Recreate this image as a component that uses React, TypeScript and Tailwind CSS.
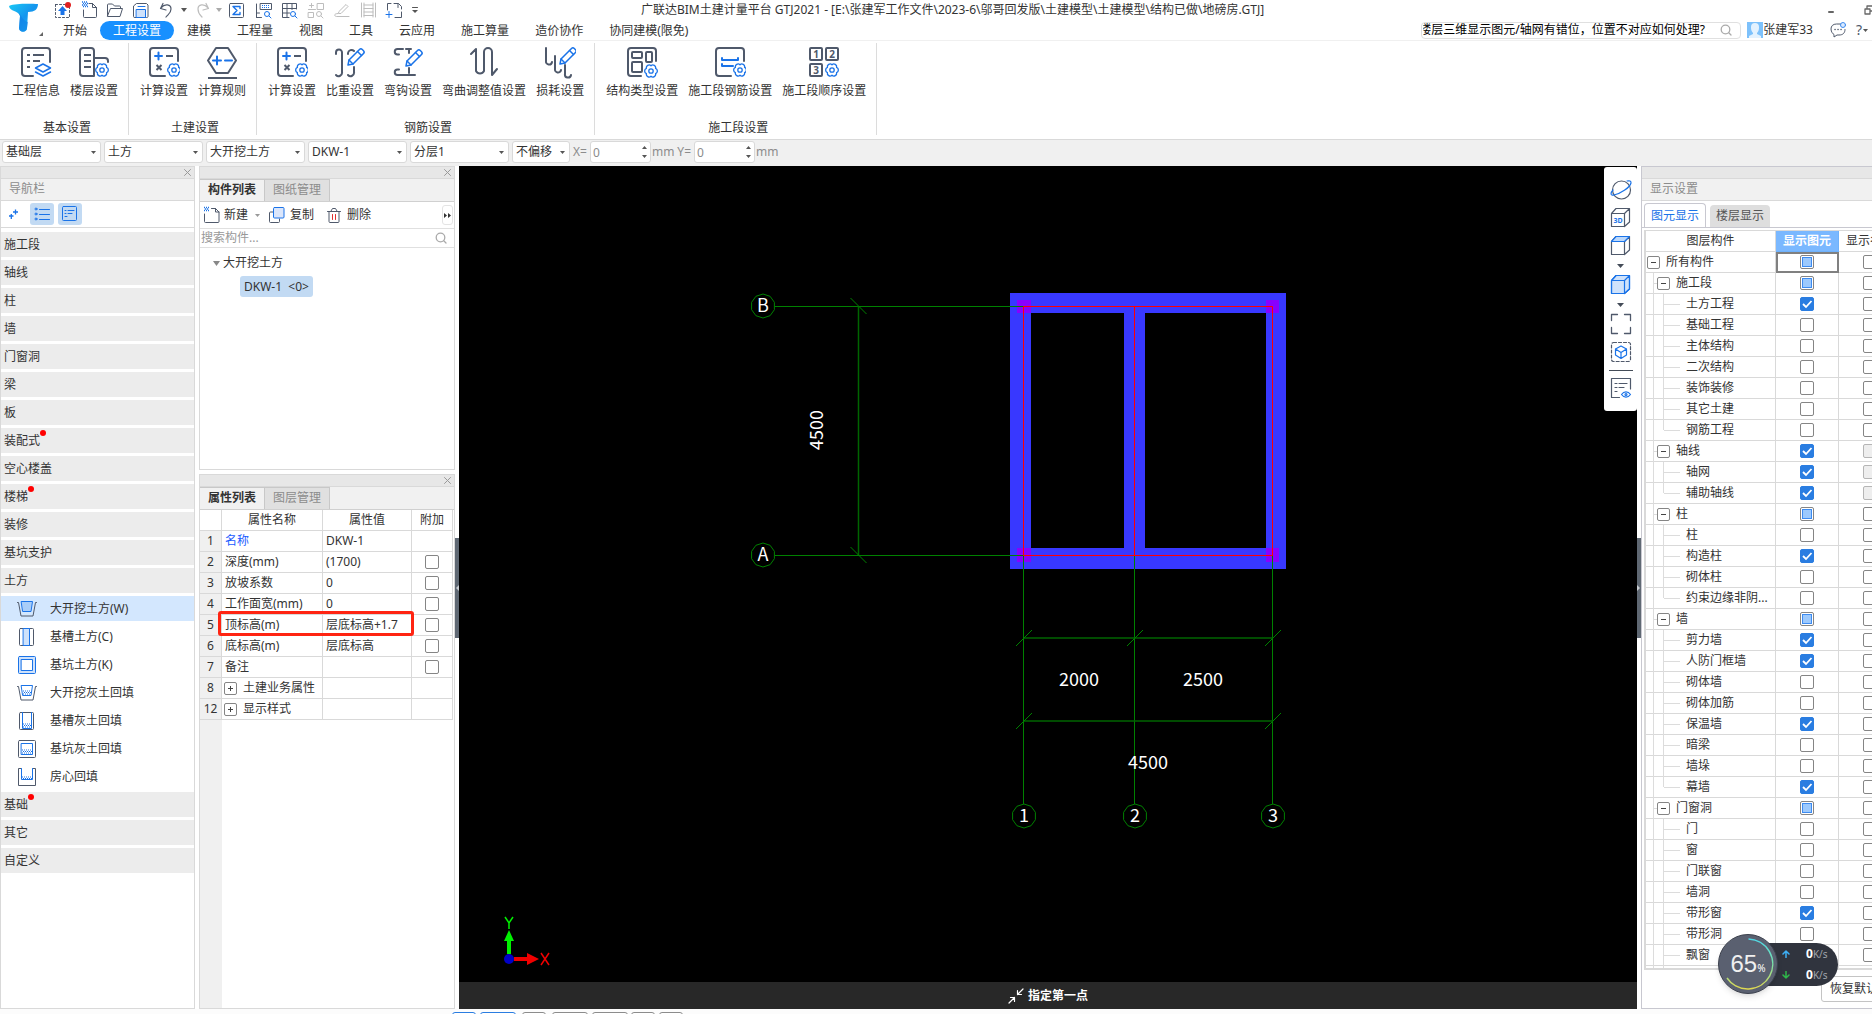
import React from "react";

const DARK = "#4f596b";
const BLUE = "#1a73e8";

type IconProps = { w: number; h: number; children: React.ReactNode; stroke?: string; sw?: number; className?: string };

function Ico({ w, h, children, stroke = DARK, sw = 1, className = "" }: IconProps) {
  return (
    <svg
      aria-hidden="true"
      width={w}
      height={h}
      viewBox={`0 0 ${w} ${h}`}
      fill="none"
      stroke={stroke}
      strokeWidth={sw}
      strokeLinecap="round"
      strokeLinejoin="round"
      className={`shrink-0 ${className}`}
    >
      {children}
    </svg>
  );
}

function Gear({ x, y }: { x: number; y: number }) {
  return (
    <g transform={`translate(${x} ${y})`} stroke={BLUE} strokeWidth="1.3">
      <path d="M4.6 -2.6A2.8 2.8 0 0 1 4.6 2.6A2.8 2.8 0 0 1 0 5.3A2.8 2.8 0 0 1 -4.6 2.6A2.8 2.8 0 0 1 -4.6 -2.6A2.8 2.8 0 0 1 0 -5.3A2.8 2.8 0 0 1 4.6 -2.6z" />
      <circle r="2.2" />
    </g>
  );
}

function Pencil({ x, y }: { x: number; y: number }) {
  return (
    <g transform={`translate(${x} ${y})`} stroke={BLUE} strokeWidth="1.5">
      <path d="M1 17l1-5L12.500 1.500a2 2 0 0 1 2.800 0l1.200 1.200a2 2 0 0 1 0 2.800L6 16z" />
      <path d="M10.500 3.500l4 4M2 12l4 4" />
    </g>
  );
}

const calcIcon = (
  <>
    <path d="M29 14V4a3 3 0 0 0-3-3H4a3 3 0 0 0-3 3v22a3 3 0 0 0 3 3h12" />
    <path d="M6 9h7M9.500 5.500v7" stroke={BLUE} strokeWidth="2" />
    <path d="M17 9h7M7.500 18l5 5M12.500 18l-5 5" strokeLinecap="butt" />
    <Gear x={25} y={23} />
  </>
);

const ribbon: { title: string; items: { label: string; icon: React.ReactNode }[] }[] = [
  {
    title: "基本设置",
    items: [
      {
        label: "工程信息",
        icon: (
          <>
            <path d="M29 15V4a3 3 0 0 0-3-3H4a3 3 0 0 0-3 3v22a3 3 0 0 0 3 3h8" />
            <path d="M6 8h3M12 8h11M6 14h3M12 14h7M6 20h3" strokeLinecap="butt" />
            <path d="M22 17l7.500 4-7.500 4-7.500-4zM14.500 25l7.500 4 7.500-4" stroke={BLUE} strokeWidth="1.5" />
          </>
        ),
      },
      {
        label: "楼层设置",
        icon: (
          <>
            <path d="M15 29H4a3 3 0 0 1-3-3V4a3 3 0 0 1 3-3h8a3 3 0 0 1 3 3v25M15 11h11a3 3 0 0 1 3 3v1" />
            <path d="M5 8h7M5 14h7M5 20h7" strokeLinecap="butt" />
            <Gear x={23} y={23} />
          </>
        ),
      },
    ],
  },
  {
    title: "土建设置",
    items: [
      { label: "计算设置", icon: calcIcon },
      {
        label: "计算规则",
        icon: (
          <>
            <path d="M9 1h12l8 12.500L21 26H9L1 13.500z" />
            <path d="M6 13.500h8M10 9.500v8M18 13.500h7" stroke={BLUE} />
            <path d="M1 31h29" strokeLinecap="butt" />
          </>
        ),
      },
    ],
  },
  {
    title: "钢筋设置",
    items: [
      { label: "计算设置", icon: calcIcon },
      {
        label: "比重设置",
        icon: (
          <>
            <path d="M1 7V5.500a3 3 0 0 1 6 0V25a3.500 3.500 0 0 1-6 3M13 7V6a3.500 3.500 0 0 1 6-2M19 20v5a3.500 3.500 0 0 1-6 3" />
            <Pencil x={12} y={1} />
          </>
        ),
      },
      {
        label: "弯钩设置",
        icon: (
          <>
            <path d="M10 2H4.500a2.500 2.500 0 0 0 0 5.500H6M13 2h5M16 2v4M16 21v5M22 28H4.500a2.500 2.500 0 0 1 0-5.500H6" />
            <Pencil x={12} y={2} />
          </>
        ),
      },
      {
        label: "弯曲调整值设置",
        icon: (
          <path d="M2 7l5-5v22a4.500 4.500 0 0 0 8 0V5a4 4 0 0 1 8 0v23l5-6" />
        ),
      },
      {
        label: "损耗设置",
        icon: (
          <>
            <path d="M1 1v13a3 3 0 0 0 6 1M10 9v13a3 3 0 0 0 6 1M20 18v9a3 3 0 0 0 6 1" />
            <Pencil x={14} y={0} />
          </>
        ),
      },
    ],
  },
  {
    title: "施工段设置",
    items: [
      {
        label: "结构类型设置",
        icon: (
          <>
            <path d="M29 14V4a3 3 0 0 0-3-3H4a3 3 0 0 0-3 3v22a3 3 0 0 0 3 3h10" />
            <rect x="5" y="5" width="10" height="6" rx="1" />
            <rect x="5" y="15" width="10" height="10" rx="1" />
            <rect x="19" y="5" width="6" height="10" rx="1" />
            <Gear x={24} y={24} />
          </>
        ),
      },
      {
        label: "施工段钢筋设置",
        icon: (
          <>
            <path d="M29 14V4a3 3 0 0 0-3-3H4a3 3 0 0 0-3 3v22a3 3 0 0 0 3 3h12" />
            <path d="M7 11v2h16v-2M7 17v2h11" stroke={BLUE} />
            <Gear x={25} y={23} />
          </>
        ),
      },
      {
        label: "施工段顺序设置",
        icon: (
          <>
            <rect x="1" y="1" width="12" height="12" rx="1" />
            <rect x="17" y="1" width="12" height="12" rx="1" />
            <rect x="1" y="17" width="12" height="12" rx="1" />
            <g fill={DARK} stroke="none" fontSize="10" fontWeight="bold" textAnchor="middle">
              <text x="7" y="11">1</text>
              <text x="23" y="11">2</text>
              <text x="7" y="27">3</text>
            </g>
            <Gear x={23} y={23} />
          </>
        ),
      },
    ],
  },
];

const GREY = "#bdbdbd";

const quick: { name: string; icon: React.ReactNode; width: string }[] = [
  {
    name: "上传",
    width: "w-[26px]",
    icon: (
      <Ico w={18} h={18}>
        <rect x="1.500" y="3.500" width="14" height="13" strokeDasharray="2 2" />
        <path d="M8.500 5l4.500 5h-2.500v4h-4v-4H4z" fill={BLUE} stroke="none" />
        <circle cx="14" cy="4" r="3" fill="#e01f1f" stroke="none" />
      </Ico>
    ),
  },
  {
    name: "新建",
    width: "w-[26px]",
    icon: (
      <Ico w={18} h={18}>
        <path d="M9 2.500h3.500l4 4v9a1 1 0 0 1-1 1h-11a1 1 0 0 1-1-1V9M12.500 2.500v4h4" />
        <path d="M2 1h6M3 2.500h5M2 4h6M3 5.500h5" stroke={BLUE} strokeDasharray="1 1" strokeLinecap="butt" strokeWidth="1.500" />
      </Ico>
    ),
  },
  {
    name: "打开",
    width: "w-[26px]",
    icon: (
      <Ico w={18} h={18}>
        <path d="M1.500 15V4a1 1 0 0 1 1-1h4l2 2h5a1 1 0 0 1 1 1v1.500M1.500 15l3-7.500h12l-2.500 8H2z" />
      </Ico>
    ),
  },
  {
    name: "保存",
    width: "w-[26px]",
    icon: (
      <Ico w={18} h={18}>
        <path d="M2.500 16.500a1 1 0 0 1-1-1V5l3-2.500h10l1.500 1.500v11.500a1 1 0 0 1-1 1z" />
        <rect x="4.500" y="8.500" width="9" height="8" stroke={BLUE} fill="#cfe2fb" />
        <path d="M6 5.500h7" stroke={BLUE} />
      </Ico>
    ),
  },
  {
    name: "撤销",
    width: "w-[26px]",
    icon: (
      <Ico w={18} h={18} sw={1.200}>
        <path d="M5 2.500L2.500 7.500l5.500 1.500M3 7c4-5 10-3.500 10 1s-3 5.500-5 8" />
      </Ico>
    ),
  },
  { name: "撤销列表", width: "w-2", icon: <Ico w={6} h={4}><path d="M0 0h6L3 4z" fill="#555" stroke="none" /></Ico> },
  {
    name: "重做",
    width: "w-[27px]",
    icon: (
      <Ico w={18} h={18} stroke={GREY} sw={1.200}>
        <path d="M13 2.500L15.500 7.500l-5.500 1.500M15 7c-4-5-10-3.500-10 1s2 6 4 8" />
      </Ico>
    ),
  },
  { name: "重做列表", width: "w-2", icon: <Ico w={6} h={4}><path d="M0 0h6L3 4z" fill="#aaa" stroke="none" /></Ico> },
  {
    name: "汇总计算",
    width: "w-7",
    icon: (
      <Ico w={18} h={18}>
        <rect x="1.500" y="2.500" width="14" height="14" rx="1" />
        <path d="M12 7.500V5.500H5L9 9.500 5 13.500h7v-2" stroke={BLUE} strokeWidth="1.400" />
      </Ico>
    ),
  },
  {
    name: "查看工程量",
    width: "w-[26px]",
    icon: (
      <Ico w={18} h={18}>
        <rect x="5.500" y="2.500" width="11" height="6" />
        <path d="M7 4.500h8M7 6.500h8" stroke={BLUE} strokeDasharray="1 1" strokeLinecap="butt" />
        <path d="M1.500 3v13.500h5M1.500 12h3M1.500 16.500V12" />
        <circle cx="12" cy="13" r="2.500" stroke={BLUE} />
        <path d="M14 15l2 2" stroke={BLUE} />
      </Ico>
    ),
  },
  {
    name: "查看报表",
    width: "w-[26px]",
    icon: (
      <Ico w={18} h={18}>
        <path d="M8 16.500H1.500v-14h14V8M1.500 7.500h14M1.500 12h7M6 2.500v14M11 2.500v6" />
        <circle cx="12" cy="13" r="2.500" stroke={BLUE} />
        <path d="M14 15l2 2" stroke={BLUE} />
      </Ico>
    ),
  },
  {
    name: "查找",
    width: "w-[26px]",
    icon: (
      <Ico w={18} h={18} stroke={GREY}>
        <path d="M4.500 2.500v4M2.500 4.500h4M10.500 2.500h6v6h-6zM1.500 11.500h5v5h-5z" />
        <circle cx="12" cy="13" r="2.500" />
        <path d="M14 15l2 2M1.500 8.500h7" />
      </Ico>
    ),
  },
  {
    name: "编辑",
    width: "w-[26px]",
    icon: (
      <Ico w={18} h={18} stroke={GREY}>
        <path d="M6 10.500l7-7 2 2-7 7H6zM5 12.500c-5 0-4 3.500 0 3h11" />
      </Ico>
    ),
  },
  {
    name: "楼层",
    width: "w-[26px]",
    icon: (
      <Ico w={18} h={18} stroke={GREY}>
        <path d="M2.500 2v14M5 2v14M14 2v14M16.500 2v14M5 4h9M5 7.500h9M5 11h9M5 14.500h9" />
      </Ico>
    ),
  },
  {
    name: "截取",
    width: "w-[26px]",
    icon: (
      <Ico w={18} h={18}>
        <path d="M2.500 9V2.500H6M9 2.500h4.500l3 3V8M16.500 11v5.500H10M13 2.500v4" />
        <path d="M1 13.500h6M4 10.500v6" stroke={BLUE} />
      </Ico>
    ),
  },
  { name: "更多", width: "w-4", icon: <Ico w={8} h={8}><path d="M1.500 1.500h5" stroke="#555" /><path d="M1 4h6L4 7z" fill="#555" stroke="none" /></Ico> },
];

const menuTabs = ["开始", "工程设置", "建模", "工程量", "视图", "工具", "云应用", "施工算量", "造价协作", "协同建模(限免)"];

function Search() {
  return (
    <Ico w={12} h={12} stroke="#aaa" sw={1.300}>
      <circle cx="5.500" cy="5.500" r="4.300" />
      <path d="M9 9l2 2" />
    </Ico>
  );
}

function Header() {
  return (
    <header className="flex h-[41px] border-b border-[#f0f0f0] bg-white">
      <button aria-label="应用菜单" className="flex w-[50px] shrink-0 items-start pl-2 pt-[3px]">
        <svg width="36" height="34" viewBox="0 0 36 34">
          <defs>
            <linearGradient id="logo" x1="0" y1="0" x2="1" y2="1">
              <stop offset="0" stopColor="#19c9f5" />
              <stop offset="0.500" stopColor="#1595ee" />
              <stop offset="1" stopColor="#22c7f7" />
            </linearGradient>
          </defs>
          <path d="M1 3C8 0 24 1 30 1c0 5-3 8-10 8l-1 16c0 5-8 5-8 0L12 13C10 7 2 9 1 3z" fill="url(#logo)" />
          <path d="M11 10c2 2 4 8 9 9l-1 6c0 5-8 5-8 0l1-12z" fill="#127fe6" opacity="0.600" />
          <path d="M35 29v4h-4z" fill="#666" />
        </svg>
      </button>
      <div className="flex min-w-0 flex-1 flex-col">
        <div className="relative flex h-[21px] items-center">
          {quick.map((q) => (
            <button key={q.name} aria-label={q.name} className={`flex h-5 shrink-0 items-center justify-center ${q.width}`}>
              {q.icon}
            </button>
          ))}
          <h1 className="ml-[218px] whitespace-nowrap text-[12px] leading-5 text-[#333]">
            广联达BIM土建计量平台 GTJ2021 - [E:\张建军工作文件\2023-6\邬哥回发版\土建模型\土建模型\结构已做\地磅房.GTJ]
          </h1>
          <div className="ml-auto flex items-center gap-7 pl-2">
            <button aria-label="最小化" className="flex w-2">
              <Ico w={8} h={10} stroke="#666" sw={2}><path d="M1 7h4" /></Ico>
            </button>
            <button aria-label="还原" className="flex w-2">
              <Ico w={10} h={10} stroke="#666" sw={1.300}><path d="M1 4h5v5H1zM3 4V1h6v5H6" /></Ico>
            </button>
          </div>
        </div>
        <div className="flex h-5 items-center">
          <nav className="flex">
            {menuTabs.map((t, i) => (
              <button
                key={t}
                className={`h-[19px] whitespace-nowrap rounded-full px-[13px] leading-[19px] ${i === 1 ? "bg-[#1890ff] text-white" : "text-[#333]"}`}
              >
                {t}
              </button>
            ))}
          </nav>
          <label className="ml-auto flex h-[17px] w-[320px] items-center rounded-sm border border-[#e0e0e0] pr-2">
            <input
              aria-label="搜索帮助"
              defaultValue="楼层三维显示图元/轴网有错位，位置不对应如何处理?"
              className="min-w-0 flex-1 bg-transparent pl-px leading-4 text-black outline-none [text-indent:-4px]"
            />
            <Search />
          </label>
          <button className="ml-1.5 flex items-center leading-4 text-[#333]">
            <svg aria-hidden="true" width="16" height="16" viewBox="0 0 16 16">
              <rect width="16" height="16" fill="#7dc1fb" />
              <path d="M4 5a4 4 0 0 1 8 0v1c0 2-1 4-2 5v1l4 2v2H2v-2l4-2v-1C5 10 4 8 4 6z" fill="#e4f2fe" />
            </svg>
            张建军33
          </button>
          <button aria-label="消息" className="ml-[17px]">
            <Ico w={16} h={16}>
              <path d="M11 2H6.500C3 2 1 4 1 7s2 5 3 5.500V15l3-2h2c4 0 6-2 6-5.500" />
              <path d="M5 7.500h.1M8 7.500h.1M11 7.500h.1" strokeWidth="1.500" />
              <circle cx="13" cy="3" r="2.500" stroke="#3d8bf0" fill="#dcebff" />
            </Ico>
          </button>
          <button aria-label="帮助" className="ml-2.5 mr-1 flex items-center gap-px text-[14px] leading-4 text-[#4f596b]">
            ?<Ico w={5} h={3}><path d="M0 0h5L2.500 3z" fill="#555" stroke="none" /></Ico>
          </button>
        </div>
      </div>
    </header>
  );
}

function Ribbon() {
  return (
    <section className="flex h-[99px] border-b border-[#d9d9d9] bg-white pb-1 pl-px pt-[2px]">
      {ribbon.map((g) => (
        <div key={g.title} className="flex flex-col border-r border-[#dcdcdc] pl-1.5 pr-[5px]">
          <div className="flex">
            {g.items.map((it, i) => (
              <button key={i} className="flex flex-col items-center px-[5px] pt-1 text-[#333]">
                <Ico w={31} h={32} sw={2}>{it.icon}</Ico>
                <span className="mt-1 whitespace-nowrap leading-4">{it.label}</span>
              </button>
            ))}
          </div>
          <div className="mt-[21px] pl-1 text-center leading-4 text-[#333]">{g.title}</div>
        </div>
      ))}
    </section>
  );
}

function Select({ value, width }: { value: string; width: string }) {
  return (
    <div className={`relative h-[22px] shrink-0 ${width}`}>
      <select aria-label={value} className="h-full w-full appearance-none rounded-[3px] border border-[#d9d9d9] bg-white pl-[3px] text-[#333]">
        <option>{value}</option>
      </select>
      <Ico w={5} h={3} className="pointer-events-none absolute right-[5px] top-[10px]">
        <path d="M0 0h5L2.500 3z" fill="#555" stroke="none" />
      </Ico>
    </div>
  );
}

function Spin({ label }: { label: string }) {
  return (
    <div className="flex items-center gap-px text-[#8c8c8c]">
      <label className="flex items-center gap-[3px]">
        {label}
        <span className="relative block h-[22px] w-[61px]">
          <input defaultValue="0" className="h-full w-full rounded-[3px] border border-[#d9d9d9] bg-white pl-0.5 text-[#8c8c8c]" />
          <Ico w={5} h={12} className="pointer-events-none absolute right-1 top-[5px]">
            <path d="M0 3h5L2.500 0zM0 9h5L2.500 12z" fill="#555" stroke="none" />
          </Ico>
        </span>
      </label>
      mm
    </div>
  );
}

function OptionsBar() {
  return (
    <section className="flex h-[26px] items-start gap-[3px] bg-[#f0f0f0] pl-0.5 pt-px">
      <Select value="基础层" width="w-[99px]" />
      <Select value="土方" width="w-[99px]" />
      <Select value="大开挖土方" width="w-[99px]" />
      <Select value="DKW-1" width="w-[99px]" />
      <Select value="分层1" width="w-[99px]" />
      <Select value="不偏移" width="w-[58px]" />
      <Spin label="X=" />
      <Spin label="Y=" />
    </section>
  );
}

function Strip({ close = true }: { close?: boolean }) {
  return (
    <div className="flex h-3 shrink-0 items-center justify-end border-b border-[#d9d9d9] bg-[#e7e7e7] pr-[3px]">
      {close && (
        <button aria-label="关闭" className="flex">
          <Ico w={7} h={7} stroke="#999"><path d="M.5.500l6 6M6.500.500l-6 6" /></Ico>
        </button>
      )}
    </div>
  );
}

function Fill({ y, h, x = 7, w = 8 }: { y: number; h: number; x?: number; w?: number }) {
  const rows = [];
  for (let r = 0; r < h; r += 1.5) {
    rows.push(
      <path key={r} d={`M${x} ${y + r}h${w}`} stroke={BLUE} strokeDasharray="1 1" strokeDashoffset={r % 3 === 0 ? 0 : 1} strokeLinecap="butt" />
    );
  }
  return <>{rows}</>;
}

const subItems: { label: string; icon: React.ReactNode }[] = [
  {
    label: "大开挖土方(W)",
    icon: (
      <>
        <path d="M.5 3.500h1l2.500 13.500h12l2.500-13.500h1" />
        <path d="M4.500 2.500h11L14 12.500H6z" stroke={BLUE} fill="#a9cdf8" />
      </>
    ),
  },
  {
    label: "基槽土方(C)",
    icon: (
      <>
        <rect x="2.500" y="1.500" width="14" height="17" rx="1" />
        <path d="M6.500 1.500h6v17h-6z" stroke={BLUE} fill="#cfe2fb" />
      </>
    ),
  },
  {
    label: "基坑土方(K)",
    icon: (
      <>
        <rect x="1.500" y="1.500" width="17" height="17" rx="1" stroke={BLUE} fill="#cfe2fb" />
        <rect x="4.500" y="4.500" width="11" height="11" stroke={BLUE} fill="#fff" />
      </>
    ),
  },
  {
    label: "大开挖灰土回填",
    icon: (
      <>
        <path d="M.5 3.500h1l2.500 13.500h12l2.500-13.500h1" />
        <path d="M4.500 2.500h11L14 12.500H6z" stroke={BLUE} fill="#fff" />
        <Fill y={8} h={4} x={6} w={8} />
      </>
    ),
  },
  {
    label: "基槽灰土回填",
    icon: (
      <>
        <rect x="2.500" y="1.500" width="14" height="17" rx="1" />
        <path d="M5.500 1.500v16h9v-16" stroke={BLUE} />
        <Fill y={13} h={4} x={6} w={8} />
      </>
    ),
  },
  {
    label: "基坑灰土回填",
    icon: (
      <>
        <rect x="1.500" y="1.500" width="17" height="17" rx="1" />
        <rect x="4.500" y="4.500" width="11" height="11" stroke={BLUE} />
        <Fill y={11} h={4} x={5} w={10} />
      </>
    ),
  },
  {
    label: "房心回填",
    icon: (
      <>
        <path d="M4 1.500H1.500v17h17v-17H16" />
        <path d="M4.500 1.500v11h11v-11" stroke={BLUE} />
        <Fill y={10} h={2} x={5} w={10} />
      </>
    ),
  },
];

const navItems: { label: string; dot?: boolean; open?: boolean }[] = [
  { label: "施工段" },
  { label: "轴线" },
  { label: "柱" },
  { label: "墙" },
  { label: "门窗洞" },
  { label: "梁" },
  { label: "板" },
  { label: "装配式", dot: true },
  { label: "空心楼盖" },
  { label: "楼梯", dot: true },
  { label: "装修" },
  { label: "基坑支护" },
  { label: "土方", open: true },
  { label: "基础", dot: true },
  { label: "其它" },
  { label: "自定义" },
];

function NavPanel() {
  return (
    <aside className="flex w-[195px] shrink-0 flex-col border border-[#d9d9d9] bg-white">
      <Strip />
      <h2 className="h-[22px] border-b border-[#d9d9d9] bg-[#f1f1f1] pl-2 leading-[19px] text-[#8c8c8c]">导航栏</h2>
      <div className="flex h-[27px] items-center gap-1 border-b border-[#d9d9d9] pl-1">
        <button aria-label="添加" className="flex h-[22px] w-[21px] items-center">
          <Ico w={18} h={14} stroke={BLUE} sw={1.300}><path d="M4 9h4.500M6.300 7v5M8 5h5M10.500 2.500v5" strokeLinecap="butt" /></Ico>
        </button>
        <button aria-label="列表视图" className="flex h-[22px] w-6 items-center justify-center rounded-[3px] bg-[#c2daf3]">
          <Ico w={16} h={16} stroke={BLUE}>
            <circle cx="2" cy="3" r="1" /><circle cx="2" cy="8" r="1" /><circle cx="2" cy="13" r="1" />
            <path d="M5.500 3.500h10M5.500 8.500h10M5.500 13.500h10" />
          </Ico>
        </button>
        <button aria-label="详细视图" className="flex h-[22px] w-6 items-center justify-center rounded-[3px] bg-[#c2daf3]">
          <Ico w={16} h={16} stroke={BLUE}>
            <rect x=".5" y=".5" width="14" height="14" rx="1" />
            <path d="M3 4.500h1M6 4.500h6M3 7.500h1M6 7.500h4M3 10.500h2" />
          </Ico>
        </button>
      </div>
      <ul className="flex flex-col gap-[3px] pt-1">
        {navItems.map((n) => (
          <React.Fragment key={n.label}>
            <li>
              <button className="flex h-[25px] w-full items-center bg-[#ececec] pl-[3px] text-[#333]">
                <span className="relative">
                  {n.label}
                  {n.dot && <span className="absolute -right-1.5 -top-0.5 h-1.5 w-1.5 rounded-full bg-[#f00]" />}
                </span>
              </button>
            </li>
            {n.open &&
              subItems.map((s, i) => (
                <li key={s.label}>
                  <button className={`flex h-[25px] w-full items-center gap-[13px] pl-4 text-[#333] ${i === 0 ? "bg-[#d3e7fe]" : ""}`}>
                    <Ico w={20} h={20}>{s.icon}</Ico>
                    {s.label}
                  </button>
                </li>
              ))}
          </React.Fragment>
        ))}
      </ul>
    </aside>
  );
}

function PanelTabs({ tabs }: { tabs: string[] }) {
  return (
    <div className="flex h-[23px] shrink-0 border-b border-[#d0d0d0] bg-[#f1f1f1]">
      {tabs.map((t, i) => (
        <button
          key={t}
          className={`flex h-full w-[65px] items-start justify-center border-r border-t border-[#c8c8c8] leading-5 ${i === 0 ? "font-bold text-[#333]" : "bg-[#e0e0e0] text-[#8c8c8c]"}`}
        >
          {t}
        </button>
      ))}
    </div>
  );
}

function ComponentPanel() {
  return (
    <section className="flex h-[304px] shrink-0 flex-col border border-[#d9d9d9] bg-white">
      <Strip />
      <PanelTabs tabs={["构件列表", "图纸管理"]} />
      <div className="flex h-[27px] items-center border-b border-[#e0e0e0] pl-1 text-[#333]">
        <button className="flex items-center gap-1">
          <Ico w={16} h={18}>
            <path d="M7.500 2.500h4l3.500 3.500v9.500a1 1 0 0 1-1 1H1.500a1 1 0 0 1-1-1V8M11.500 2.500V6H15" />
            <path d="M0 1.500h5M1 3h4M0 4.500h5" stroke={BLUE} strokeDasharray="1 1" strokeLinecap="butt" strokeWidth="1.500" />
          </Ico>
          新建
        </button>
        <button aria-label="新建选项" className="flex w-[18px] justify-center">
          <Ico w={5} h={3}><path d="M0 0h5L2.500 3z" fill="#999" stroke="none" /></Ico>
        </button>
        <button className="ml-[3px] flex items-center gap-[5px]">
          <Ico w={16} h={18}>
            <path d="M4 6H1.500a1 1 0 0 0-1 1v8.500a1 1 0 0 0 1 1h8a1 1 0 0 0 1-1V13" />
            <rect x="4.500" y="1.500" width="10.500" height="10.500" rx="1" stroke={BLUE} fill="#dbe6fb" />
          </Ico>
          复制
        </button>
        <button className="ml-[13px] flex items-center gap-[5px]">
          <Ico w={15} h={18}>
            <path d="M.5 5.500h13M4 5L5.500 2.500h3L10 5M2 5.500v10a1 1 0 0 0 1 1h8a1 1 0 0 0 1-1v-10" />
            <path d="M5.500 8.500v5M8.500 8.500v5" stroke="#e03030" />
          </Ico>
          删除
        </button>
        <button aria-label="更多" className="ml-auto mr-px flex h-5 w-[11px] items-center justify-center rounded-[3px] border border-[#e4e4e4]">
          <Ico w={7} h={5}><path d="M0 0v5l3-2.500zM4 0v5l3-2.500z" fill="#333" stroke="none" /></Ico>
        </button>
      </div>
      <label className="flex h-[19px] items-center border-b border-[#e0e0e0] pl-px pr-[7px]">
        <input aria-label="搜索构件" placeholder="搜索构件..." className="min-w-0 flex-1 leading-4 outline-none placeholder:text-[#999]" />
        <Search />
      </label>
      <div className="flex flex-col items-start pt-1.5 text-[#333]">
        <button className="ml-[13px] flex h-[18px] items-center gap-[3px]">
          <Ico w={7} h={5}><path d="M0 0h7L3.500 5z" fill="#888" stroke="none" /></Ico>
          大开挖土方
        </button>
        <button className="ml-10 mt-1 h-[21px] whitespace-pre rounded-[3px] bg-[#c2daf3] px-1 leading-5">DKW-1  &lt;0&gt;</button>
      </div>
    </section>
  );
}

type State = "on" | "off" | "mix" | "dis";

function Check({ state, label }: { state: State; label: string }) {
  return (
    <span className="relative block h-3.5 w-3.5">
      <input
        type="checkbox"
        aria-label={label}
        defaultChecked={state === "on"}
        disabled={state === "dis"}
        className="peer block h-3.5 w-3.5 appearance-none rounded-[2px] border border-[#858585] bg-white checked:border-[#2a7de1] checked:bg-[#2a7de1] disabled:border-[#b5b5b5] disabled:bg-[#eeeeee]"
      />
      <svg aria-hidden="true" className="pointer-events-none absolute inset-0 hidden peer-checked:block" width="14" height="14" viewBox="0 0 14 14" fill="none" stroke="#fff" strokeWidth="1.800">
        <path d="M3 7l3 3 5.500-6" />
      </svg>
      {state === "mix" && <span className="pointer-events-none absolute inset-0.5 border border-[#3d8bf0] bg-[#9cc9fd]" />}
    </span>
  );
}

function Toggle({ open, label }: { open: boolean; label: string }) {
  return (
    <button aria-label={label} className="flex h-[13px] w-[13px] shrink-0 items-center justify-center rounded-[2px] border border-[#858585] bg-white">
      <Ico w={5} h={5} stroke="#444"><path d={open ? "M0 2.500h5" : "M0 2.500h5M2.500 0v5"} strokeLinecap="butt" /></Ico>
    </button>
  );
}

const props: { n: string; name: string; value: string; check: boolean; group?: boolean }[] = [
  { n: "1", name: "名称", value: "DKW-1", check: false },
  { n: "2", name: "深度(mm)", value: "(1700)", check: true },
  { n: "3", name: "放坡系数", value: "0", check: true },
  { n: "4", name: "工作面宽(mm)", value: "0", check: true },
  { n: "5", name: "顶标高(m)", value: "层底标高+1.7", check: true },
  { n: "6", name: "底标高(m)", value: "层底标高", check: true },
  { n: "7", name: "备注", value: "", check: true },
  { n: "8", name: "土建业务属性", value: "", check: false, group: true },
  { n: "12", name: "显示样式", value: "", check: false, group: true },
];

function PropertyPanel() {
  return (
    <section className="flex min-h-0 flex-1 flex-col border border-[#d9d9d9] bg-white">
      <Strip />
      <PanelTabs tabs={["属性列表", "图层管理"]} />
      <div className="relative flex flex-1 flex-col">
        <table className="w-[253px] table-fixed border-separate border-spacing-0 text-[#333]">
          <colgroup>
            <col className="w-[22px]" />
            <col className="w-[101px]" />
            <col className="w-[89px]" />
            <col />
          </colgroup>
          <thead>
            <tr className="h-[21px]">
              {["", "属性名称", "属性值", "附加"].map((h, i) => (
                <th key={i} className="border-b border-r border-[#d9d9d9] p-0 font-normal leading-5">{h}</th>
              ))}
            </tr>
          </thead>
          <tbody>
            {props.map((p) => (
              <tr key={p.n} className="h-[21px]">
                <td className="border-b border-r border-[#d9d9d9] bg-[#f0f0f0] p-0 text-center leading-5">{p.n}</td>
                <td className={`border-b border-r border-[#d9d9d9] p-0 leading-5 ${p.n === "1" ? "text-[#1a5cff]" : ""}`}>
                  <div className={`flex h-5 items-center gap-1.5 whitespace-nowrap ${p.group ? "pl-0.5" : "pl-[3px]"}`}>
                    {p.group && <Toggle open={false} label={`展开${p.name}`} />}
                    {p.name}
                  </div>
                </td>
                <td className="whitespace-nowrap border-b border-r border-[#d9d9d9] p-0 pl-[3px] leading-5">{p.value}</td>
                <td className="border-b border-r border-[#d9d9d9] p-0">
                  <div className="flex justify-center">{p.check && <Check state="off" label={`附加${p.name}`} />}</div>
                </td>
              </tr>
            ))}
          </tbody>
        </table>
        <div className="w-[22px] flex-1 bg-[#f0f0f0]" />
        <div className="pointer-events-none absolute left-[18px] top-[101px] h-[25px] w-[196px] rounded-[3px] border-[3px] border-[#ff2412]" />
      </div>
    </section>
  );
}

function Handle({ dir }: { dir: "left" | "right" }) {
  return (
    <div className="flex w-1 shrink-0 items-start bg-white">
      <button aria-label={dir === "left" ? "收起左侧" : "收起右侧"} className="mt-[372px] flex h-[100px] w-1 items-center bg-[#5f6873]">
        <Ico w={4} h={6}>
          <path d={dir === "left" ? "M4 0v6L1 3z" : "M0 0v6l3-3z"} fill="#c8ccd2" stroke="none" />
        </Ico>
      </button>
    </div>
  );
}

function decagon(cx: number, cy: number) {
  const pts = [];
  for (let i = 0; i < 10; i++) {
    const a = (i * Math.PI) / 5 + Math.PI / 10;
    pts.push(`${(cx + 12 * Math.cos(a)).toFixed(1)},${(cy + 12 * Math.sin(a)).toFixed(1)}`);
  }
  return pts.join(" ");
}

const bubbles: [number, number, string][] = [
  [304, 140, "B"],
  [304, 389, "A"],
  [565, 650, "1"],
  [676, 650, "2"],
  [814, 650, "3"],
];

function Drawing() {
  return (
    <svg className="h-full w-full" viewBox="0 0 1178 816" fill="none" role="img" aria-label="平面图">
      <path d="M551 127h276v276H551zM572 147v235h93V147zM686 147v235h121V147z" fill="#3838ff" fillRule="evenodd" />
      <g fill="#8800ff">
        <path d="M558 134h14v13h-14zM807 134h13v13h-13zM558 382h14v14h-14zM807 382h13v14h-13z" />
      </g>
      <g stroke="#008000" strokeWidth="1">
        <path d="M316 140.500H565M316 389.500H565M564.500 389v249M675.500 389v249M813.500 389v249" />
        <path d="M399.500 140v249M565 472h249M565 555h249" stroke="#006400" strokeWidth="1.500" />
        <path d="M391.500 132l16 16M391.500 381l16 16M557 480l16-16M668 480l16-16M806 480l16-16M557 563l16-16M806 563l16-16" />
        {bubbles.map(([x, y]) => (
          <polygon key={`${x}-${y}`} points={decagon(x, y)} />
        ))}
      </g>
      <path d="M564.500 389.500v-249h249v249zM675.500 140v249" stroke="#ff0000" strokeWidth="1" />
      <g fill="#fff" fontSize="18" textAnchor="middle" fontFamily="'Noto Sans CJK SC', sans-serif">
        {bubbles.map(([x, y, t]) => (
          <text key={t} x={x} y={y + 6}>{t}</text>
        ))}
        <text x="620" y="520">2000</text>
        <text x="744" y="520">2500</text>
        <text x="689" y="603">4500</text>
        <text transform="translate(364 264) rotate(-90)">4500</text>
      </g>
      <g transform="translate(50 793)">
        <path d="M0-5v-16" stroke="#00f000" strokeWidth="4" />
        <path d="M0-29l-5 11H5z" fill="#00f000" />
        <path d="M5 0h14" stroke="#f00000" strokeWidth="4" />
        <path d="M30 0L18-6V6z" fill="#f00000" />
        <circle r="5" fill="#0000c8" />
        <path d="M-4-42l4 6 4-6M0-36v6" stroke="#00f000" strokeWidth="1.500" />
        <path d="M32-6l8 12M40-6l-8 12" stroke="#f00000" strokeWidth="1.500" />
      </g>
    </svg>
  );
}

const cubeOutline = "M1.500 6.500h13v13h-13zM1.500 6.500l4.500-5h13.500l-5 5M19.500 1.500V15l-5 4.500";

const viewTools: { name: string; icon: React.ReactNode; small?: boolean }[] = [
  {
    name: "动态观察",
    icon: (
      <Ico w={22} h={22} sw={1.200}>
        <circle cx="11.500" cy="11" r="9" />
        <path d="M3 11C0 14 .5 17 4 16c6-1 16-7.500 17-12 .3-2-1.500-2.500-4-2" stroke={BLUE} />
      </Ico>
    ),
  },
  {
    name: "三维",
    icon: (
      <Ico w={22} h={22} sw={1.200}>
        <path d={cubeOutline} />
        <text x="8" y="16" fontSize="7" fontWeight="bold" textAnchor="middle" fill={BLUE} stroke="none">3D</text>
      </Ico>
    ),
  },
  {
    name: "俯视",
    icon: (
      <Ico w={22} h={22} sw={1.200}>
        <path d={cubeOutline} />
        <path d="M1.500 6.500l4.500-5h13.500l-5 5z" stroke={BLUE} fill="#bcd8fb" />
      </Ico>
    ),
  },
  { name: "俯视选项", small: true, icon: <Ico w={7} h={4}><path d="M0 0h7L3.500 4z" fill="#444c58" stroke="none" /></Ico> },
  {
    name: "着色",
    icon: (
      <Ico w={22} h={22} sw={1.200} stroke={BLUE}>
        <path d="M1.500 6.500l4.500-5h13.500V15l-5 4.500h-13z" fill="#cfe2fb" />
        <path d={cubeOutline} />
      </Ico>
    ),
  },
  { name: "着色选项", small: true, icon: <Ico w={7} h={4}><path d="M0 0h7L3.500 4z" fill="#444c58" stroke="none" /></Ico> },
  {
    name: "全屏",
    icon: (
      <Ico w={22} h={22} sw={1.300}>
        <path d="M1.500 7.500v-6h6M14.500 1.500h6v6M20.500 14.500v6h-6M7.500 20.500h-6v-6" />
      </Ico>
    ),
  },
  {
    name: "局部三维",
    icon: (
      <Ico w={22} h={22} sw={1.200}>
        <rect x="1.500" y="1.500" width="19" height="19" rx="2" strokeDasharray="3 2" />
        <path d="M11 5l5.500 3v6L11 17.500 5.500 14V8zM5.500 8l5.500 3.500L16.500 8M11 11.500v6" stroke={BLUE} />
      </Ico>
    ),
  },
];

function ViewBar() {
  return (
    <div className="absolute right-0 top-px flex h-[244px] w-[33px] flex-col items-center rounded-[3px] bg-white pt-[9px]">
      {viewTools.map((v) => (
        <button key={v.name} aria-label={v.name} className={`flex shrink-0 items-center justify-center ${v.small ? "h-[11px]" : "h-7"}`}>
          {v.icon}
        </button>
      ))}
      <span className="mt-1 h-px w-6 shrink-0 bg-[#444c58]" />
      <button aria-label="显示设置" className="mt-1.5">
        <Ico w={22} h={22} sw={1.200}>
          <path d="M20.500 12V1.500h-19v19h8M5 6.500h2M9 6.500h8M5 10.500h2M9 10.500h5M5 14.500h2" />
          <path d="M11.500 17.500c2.500-3.500 6.500-3.500 9 0-2.500 3.500-6.500 3.500-9 0z" stroke={BLUE} />
          <circle cx="16" cy="17.500" r="1" stroke={BLUE} />
        </Ico>
      </button>
    </div>
  );
}

const tree: [number, string, State][] = [
  [0, "所有构件", "mix"],
  [1, "施工段", "mix"],
  [2, "土方工程", "on"],
  [2, "基础工程", "off"],
  [2, "主体结构", "off"],
  [2, "二次结构", "off"],
  [2, "装饰装修", "off"],
  [2, "其它土建", "off"],
  [2, "钢筋工程", "off"],
  [1, "轴线", "on"],
  [2, "轴网", "on"],
  [2, "辅助轴线", "on"],
  [1, "柱", "mix"],
  [2, "柱", "off"],
  [2, "构造柱", "on"],
  [2, "砌体柱", "off"],
  [2, "约束边缘非阴...", "off"],
  [1, "墙", "mix"],
  [2, "剪力墙", "on"],
  [2, "人防门框墙", "on"],
  [2, "砌体墙", "off"],
  [2, "砌体加筋", "off"],
  [2, "保温墙", "on"],
  [2, "暗梁", "off"],
  [2, "墙垛", "off"],
  [2, "幕墙", "on"],
  [1, "门窗洞", "mix"],
  [2, "门", "off"],
  [2, "窗", "off"],
  [2, "门联窗", "off"],
  [2, "墙洞", "off"],
  [2, "带形窗", "on"],
  [2, "带形洞", "off"],
  [2, "飘窗", "off"],
  [2, "", "off"],
];

function TreeCell({ depth, label, last }: { depth: number; label: string; last: boolean }) {
  if (depth === 0) {
    return (
      <div className="flex h-5 items-center gap-1.5 pl-px">
        <Toggle open label={`折叠${label}`} />
        {label}
      </div>
    );
  }
  return (
    <div className="flex h-5 items-center whitespace-nowrap">
      <span className="h-[21px] w-2 shrink-0 border-r border-[#dcdcdc]" />
      {depth === 1 ? (
        <>
          <span className="w-[3px] shrink-0 border-t border-[#dcdcdc]" />
          <Toggle open label={`折叠${label}`} />
          <span className="pl-1.5">{label}</span>
        </>
      ) : (
        <>
          <span className={`w-[10px] shrink-0 border-r border-[#dcdcdc] ${last ? "h-[10px] self-start" : "h-[21px]"}`} />
          <span className="w-4 shrink-0 border-t border-[#dcdcdc]" />
          <span className="pl-1.5">{label}</span>
        </>
      )}
    </div>
  );
}

function DisplayPanel() {
  return (
    <aside className="relative flex w-[231px] shrink-0 flex-col overflow-hidden border-y border-l border-[#c8c8d0] bg-white">
      <Strip close={false} />
      <h2 className="h-[22px] shrink-0 border-b border-[#d9d9d9] bg-[#f1f1f1] pl-2 leading-[19px] text-[#8c8c8c]">显示设置</h2>
      <div className="flex h-[27px] shrink-0 items-end gap-1 border-b border-[#c8c8d0] pl-0.5">
        <button className="h-6 w-[62px] rounded-t-[4px] border border-b-0 border-[#c8c8d0] bg-white leading-[22px] text-[#1a73e8]">图元显示</button>
        <button className="h-[22px] w-[60px] rounded-t-[4px] bg-[#dedede] leading-5 text-[#555]">楼层显示</button>
      </div>
      <div className="ml-0.5 mt-0.5 flex-1 overflow-hidden border-b-2 border-l-2 border-t border-[#d9d9d9]">
        <div className="h-0">
          <table className="w-64 table-fixed border-separate border-spacing-0 text-[#333]">
            <colgroup>
              <col className="w-[130px]" />
              <col className="w-[63px]" />
              <col className="w-[63px]" />
            </colgroup>
            <thead>
              <tr className="h-[21px]">
                <th className="border-b border-r border-[#d9d9d9] p-0 font-normal leading-5">图层构件</th>
                <th className="border-b border-r border-[#6fb1fb] bg-[#7ab8ff] p-0 font-bold leading-5 text-white">显示图元</th>
                <th className="border-b border-r border-[#d9d9d9] p-0 font-normal leading-5">显示名称</th>
              </tr>
            </thead>
            <tbody>
              {tree.map(([depth, label, state], i) => (
                <tr key={i} className="h-[21px]">
                  <td className="border-b border-r border-[#d9d9d9] p-0 leading-5">
                    <TreeCell depth={depth} label={label} last={i + 1 < tree.length && tree[i + 1][0] < depth} />
                  </td>
                  <td className={`border-b border-r border-[#d9d9d9] p-0 ${i === 0 ? "outline-2 -outline-offset-2 outline-[#808080]" : ""}`}>
                    <div className="flex justify-center"><Check state={state} label={`显示图元 ${label}`} /></div>
                  </td>
                  <td className="border-b border-r border-[#d9d9d9] p-0">
                    <div className="flex justify-center">
                      <Check state={i >= 9 && i <= 11 ? "dis" : "off"} label={`显示名称 ${label}`} />
                    </div>
                  </td>
                </tr>
              ))}
            </tbody>
          </table>
        </div>
      </div>
      <div className="flex h-[38px] shrink-0 items-center pl-[179px]">
        <button className="h-[26px] shrink-0 whitespace-nowrap rounded-[3px] border border-[#c4c4c4] px-2 text-[#333]">恢复默认设置</button>
      </div>
    </aside>
  );
}

function SpeedRow({ stroke, d }: { stroke: string; d: string }) {
  return (
    <div className="flex h-[21px] items-center gap-4">
      <Ico w={8} h={8} stroke={stroke} sw={1.500}><path d={d} /></Ico>
      <span className="whitespace-nowrap font-bold leading-4">
        0<span className="text-[10px] font-normal text-[#a0a4ac]">K/s</span>
      </span>
    </div>
  );
}

function SpeedWidget() {
  return (
    <div className="absolute bottom-5 right-[34px] flex items-center text-white">
      <div className="relative z-10 flex h-[60px] w-[60px] items-center justify-center rounded-full border border-[#3c414d] bg-[#5a6070] shadow-md">
        <svg aria-hidden="true" className="absolute inset-0" width="58" height="58" viewBox="0 0 58 58" fill="none" strokeWidth="1.500">
          <defs>
            <linearGradient id="ring" x1="0" y1="0" x2="0" y2="1">
              <stop offset="0" stopColor="#4fd8e8" />
              <stop offset="0.500" stopColor="#7ae0a8" />
              <stop offset="1" stopColor="#e0d850" />
            </linearGradient>
          </defs>
          <path d="M29.500 4A25 25 0 1 1 8 43" stroke="url(#ring)" />
        </svg>
        <span className="text-[24px] leading-none text-[#f0f0f0] [font-family:'Liberation_Sans',sans-serif]">65</span>
        <span className="pt-2 text-[10px] leading-none">%</span>
      </div>
      <div className="-ml-6 flex h-[43px] w-[84px] flex-col justify-center rounded-r-full bg-[#30343e] pl-7 text-[12px]">
        <SpeedRow stroke="#3db0f7" d="M4 7.500V1M1 4l3-3 3 3" />
        <SpeedRow stroke="#2fb84a" d="M4 .5V7M1 4l3 3 3-3" />
      </div>
    </div>
  );
}

const statusButtons: { name: string; cls: string }[] = [
  { name: "正交", cls: "w-6 border-[#2a7de1]" },
  { name: "对象捕捉", cls: "ml-1 w-9 border-[#2a7de1]" },
  { name: "动态输入", cls: "ml-1.5 w-6 border-[#8c8c8c]" },
  { name: "跨图层选择", cls: "ml-1.5 w-9 border-[#8c8c8c]" },
  { name: "跨层编辑", cls: "ml-1 w-9 border-[#8c8c8c]" },
  { name: "折线选择", cls: "ml-[3px] w-6 border-[#8c8c8c]" },
  { name: "捕捉设置", cls: "ml-1 w-6 border-[#8c8c8c]" },
];

export default function App() {
  return (
    <div className="relative flex h-screen flex-col overflow-hidden bg-white text-[12px] [font-family:'Noto_Sans','Noto_Sans_CJK_SC',sans-serif]">
      <Header />
      <Ribbon />
      <OptionsBar />
      <div className="flex min-h-0 flex-1">
        <NavPanel />
        <div className="ml-1 flex w-64 shrink-0 flex-col gap-1">
          <ComponentPanel />
          <PropertyPanel />
        </div>
        <Handle dir="left" />
        <main className="flex min-w-0 flex-1 flex-col bg-black">
          <div className="relative min-h-0 flex-1">
            <Drawing />
            <ViewBar />
          </div>
          <div className="flex h-[27px] shrink-0 items-center justify-center gap-1 bg-[#282828] font-bold text-white">
            <Ico w={16} h={16} stroke="#fff" sw={1.200}><path d="M15 1L9.500 6.500M9.500 2.500v4h4M1 15l5.500-5.500M2.500 9.500h4v4" /></Ico>
            指定第一点
          </div>
        </main>
        <Handle dir="right" />
        <DisplayPanel />
      </div>
      <footer className="flex h-[5px] shrink-0 items-start overflow-hidden bg-[#fcfcfc] pl-[452px] pt-[3px]">
        {statusButtons.map((s) => (
          <button key={s.name} aria-label={s.name} className={`h-4 shrink-0 rounded-[3px] border bg-white ${s.cls}`} />
        ))}
      </footer>
      <SpeedWidget />
    </div>
  );
}
